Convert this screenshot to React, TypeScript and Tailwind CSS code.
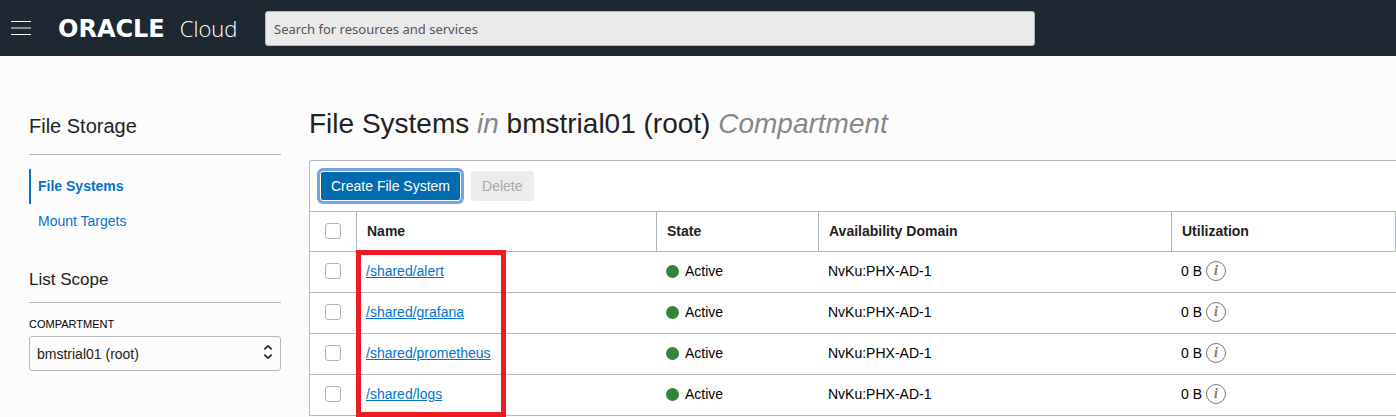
import React from "react";

const fileSystems = [
  { name: "/shared/alert", state: "Active", domain: "NvKu:PHX-AD-1", used: "0 B" },
  { name: "/shared/grafana", state: "Active", domain: "NvKu:PHX-AD-1", used: "0 B" },
  { name: "/shared/prometheus", state: "Active", domain: "NvKu:PHX-AD-1", used: "0 B" },
  { name: "/shared/logs", state: "Active", domain: "NvKu:PHX-AD-1", used: "0 B" },
];

function Checkbox({ label }: { label: string }) {
  return (
    <input
      type="checkbox"
      aria-label={label}
      className="block size-4 appearance-none rounded-[3px] border border-[#aeb4be] bg-white checked:bg-[#0572ce]"
    />
  );
}

function Header() {
  return (
    <header className="flex h-14 items-center bg-[#1e2833] pl-[11px] pr-4 text-white">
      <button type="button" aria-label="Open navigation menu" className="flex w-5 flex-col gap-[5px]">
        <span className="h-px w-full bg-white" />
        <span className="h-0.5 w-full bg-[#8a8f8e]" />
        <span className="h-px w-full bg-white" />
      </button>
      <a href="#home" className="ml-[27px] flex w-[207px] shrink-0 items-baseline gap-[15px]">
        <span className="font-['DejaVu_Sans',sans-serif] text-2xl/8 font-bold">ORACLE</span>
        <span className="font-['Open_Sans',sans-serif] text-[22px]/8 font-light">Cloud</span>
      </a>
      <input
        type="search"
        aria-label="Search for resources and services"
        placeholder="Search for resources and services"
        className="h-[35px] min-w-0 max-w-[770px] flex-1 rounded-[3px] border border-[#b1b6c1] bg-[#eaeaea] px-2 pt-0.5 font-['Noto_Sans',sans-serif] text-[13px] text-[#333] placeholder:text-[#555]"
      />
    </header>
  );
}

function Sidebar() {
  return (
    <aside className="w-[252px] shrink-0 pt-[58px]">
      <h2 className="border-b border-[#b1b6c1] pb-[15px] text-xl/[25px] text-[#222]">File Storage</h2>
      <nav className="mt-3.5 flex flex-col text-sm text-[#0572ce]">
        <a
          href="#file-systems"
          className="flex h-[35px] items-center border-l-2 border-[#0572ce] pb-0.5 pl-[7px] font-bold"
        >
          File Systems
        </a>
        <a
          href="#mount-targets"
          className="flex h-[35px] items-center border-l-2 border-transparent pb-0.5 pl-[7px]"
        >
          Mount Targets
        </a>
      </nav>
      <h3 className="mt-[31px] border-b border-[#b1b6c1] pb-3 text-[17px]/5 text-[#222]">List Scope</h3>
      <label htmlFor="compartment" className="mt-[13px] block text-[11px]/4 text-black">
        COMPARTMENT
      </label>
      <div className="relative mt-1">
        <select
          id="compartment"
          className="h-[35px] w-full appearance-none rounded-[3px] border border-[#b1b6c1] bg-[#fcfcfc] px-[7px] text-sm text-[#222]"
        >
          <option>bmstrial01 (root)</option>
        </select>
        <svg
          viewBox="0 0 10 16"
          className="pointer-events-none absolute right-2 top-2 h-4 w-2.5"
          fill="none"
          stroke="#222"
          strokeWidth="1.7"
        >
          <path d="M1.3 5.3 5 1.8l3.7 3.5M1.3 10.7 5 14.2l3.7-3.5" />
        </svg>
      </div>
    </aside>
  );
}

function FileSystemTable() {
  return (
    <div className="relative">
      <table className="w-full table-fixed border-separate border-spacing-0 text-left text-sm/5 text-black">
        <colgroup>
          <col className="w-[47px]" />
          <col className="w-[300px]" />
          <col className="w-[162px]" />
          <col className="w-[353px]" />
          <col />
        </colgroup>
        <thead>
          <tr className="h-[41px] text-[#222] *:border-y *:border-r *:border-[#b1b6c1] *:px-2.5 *:pt-0 *:pb-0.5">
            <th>
              <div className="pl-[5px]">
                <Checkbox label="Select all file systems" />
              </div>
            </th>
            <th>Name</th>
            <th>State</th>
            <th>Availability Domain</th>
            <th>Utilization</th>
          </tr>
        </thead>
        <tbody>
          {fileSystems.map((fs) => (
            <tr key={fs.name} className="h-[41px] *:border-b *:border-[#b1b6c1] *:px-[9px] *:pt-0 *:pb-0.5">
              <td>
                <div className="pl-1.5">
                  <Checkbox label={"Select " + fs.name} />
                </div>
              </td>
              <td>
                <a href={"#" + fs.name} className="text-[#0572ce] underline">
                  {fs.name}
                </a>
              </td>
              <td>
                <div className="flex items-center gap-1.5">
                  <span className="size-[13px] rounded-full bg-[#338438]" />
                  {fs.state}
                </div>
              </td>
              <td>{fs.domain}</td>
              <td>
                <div className="flex items-center gap-1">
                  {fs.used}
                  <button
                    type="button"
                    aria-label={"About utilization of " + fs.name}
                    className="flex size-5 items-center justify-center rounded-full border border-[#777] font-['Liberation_Serif',serif] text-sm/4 font-bold italic text-[#777]"
                  >
                    i
                  </button>
                </div>
              </td>
            </tr>
          ))}
        </tbody>
      </table>
      <div className="pointer-events-none absolute -bottom-px left-[46px] h-[167px] w-[150px] border-5 border-[#ed1c24]" />
    </div>
  );
}

export default function App() {
  return (
    <div className="min-h-screen bg-[#fcfcfc] font-['Liberation_Sans',Arial,sans-serif]">
      <Header />
      <div className="flex gap-7 pl-[29px]">
        <Sidebar />
        <main className="min-w-0 flex-1 pt-[50px]">
          <h1 className="text-[28px]/9 text-[#222]">
            File Systems <i className="text-[#888]">in</i> bmstrial01 (root) <i className="text-[#888]">Compartment</i>
          </h1>
          <section className="mt-[18px] rounded-tl-[3px] border-l border-t border-[#b1b6c1] bg-white">
            <div className="flex gap-2.5 px-2.5 py-2.5 text-sm">
              <button
                type="button"
                className="h-[30px] rounded-[3px] border border-white bg-[#006bae] px-2.5 text-white ring-3 ring-[#76a4e2]"
              >
                Create File System
              </button>
              <button type="button" disabled className="h-[30px] rounded-[3px] bg-[#ececec] px-[11px] text-[#aaa]">
                Delete
              </button>
            </div>
            <FileSystemTable />
          </section>
        </main>
      </div>
    </div>
  );
}
